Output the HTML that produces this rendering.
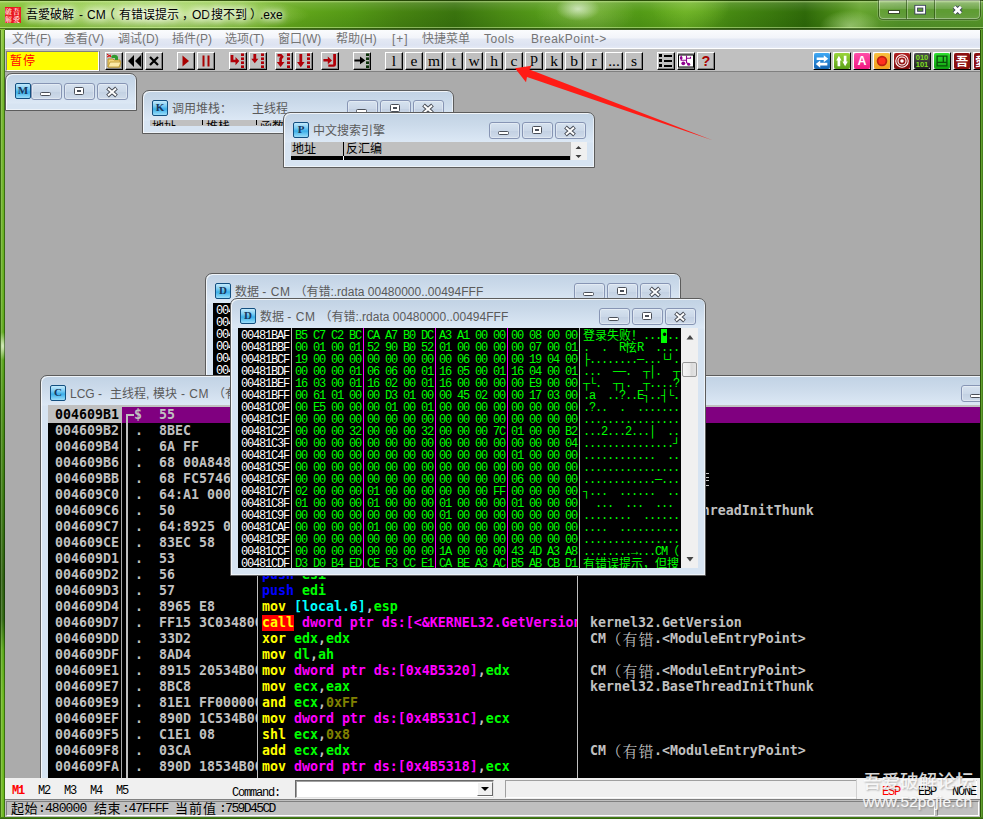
<!DOCTYPE html>
<html><head><meta charset="utf-8"><title>OllyDbg</title><style>
html,body{margin:0;padding:0}
body{width:983px;height:819px;overflow:hidden;position:relative;background:#4f8f16;font-family:"Liberation Sans","Noto Sans CJK SC",sans-serif;font-size:12px;line-height:1}
div,span,i,b{box-sizing:border-box}
.a,.a>span,.a>i,.a>b,.a>svg{position:absolute}
i,b{font-style:normal;font-weight:inherit;display:block}
#glass{left:0;top:0;width:983px;height:819px;background:
 radial-gradient(ellipse 22px 12px at 578px 9px,rgba(215,235,200,.85),rgba(200,230,170,0) 100%),
 radial-gradient(ellipse 50px 26px at 585px 12px,rgba(150,200,90,.6),rgba(150,200,90,0) 100%),
 radial-gradient(ellipse 40px 30px at 690px 4px,rgba(125,190,50,.7),rgba(120,180,60,0) 100%),
 radial-gradient(ellipse 30px 16px at 850px 26px,rgba(190,230,150,.7),rgba(160,210,110,0) 100%),
 radial-gradient(ellipse 150px 20px at 160px 15px,rgba(228,246,190,.85),rgba(215,240,170,.5) 55%,rgba(200,235,150,0) 100%),
 linear-gradient(90deg,#86c433 0px,#82c230 20px,#76b926 250px,#62a61b 300px,#559a16 350px,#478411 400px,#3a740e 455px,#4a8a14 500px,#549a19 540px,#5c9f20 600px,#539b16 640px,#63aa1e 685px,#478a12 730px,#3b7a0e 770px,#2f6a09 805px,#4a8a16 838px,#66a42e 860px,#56962a 900px,#58982a 983px)}
#glasstop{left:0;top:0;width:983px;height:30px;background:linear-gradient(180deg,rgba(25,50,0,.75) 0px,rgba(25,50,0,.75) 1px,rgba(235,250,200,.55) 1px,rgba(235,250,200,.35) 2px,rgba(255,255,255,.12) 3px,rgba(255,255,255,0) 12px,rgba(0,40,0,.10) 26px,rgba(0,40,0,.10) 27px,rgba(220,245,180,.45) 27px,rgba(220,245,180,.45) 28px,rgba(30,60,10,.6) 28px,rgba(30,60,10,.6) 29px,transparent 29px)}
#title{left:0;top:7px;font-size:12px;line-height:16px;color:#000;white-space:nowrap;text-shadow:0 0 6px #fff,0 0 8px #fff,0 0 10px rgba(255,255,255,.8)}
#title span{top:0}
#client{left:5px;top:29px;width:975px;height:788px;background:#ababab;overflow:hidden}
#menubar{left:0;top:0;width:975px;height:19px;border-top:1px solid #44662a;background:linear-gradient(180deg,#fbfcfe 0,#f2f4fa 8px,#e4e9f4 9px,#dde3f1 15px,#e4e9f5 18px)}
#menubar span{top:1px;line-height:16px;font-size:12px;color:#747474;white-space:nowrap}
#toolbar{left:0;top:19px;width:975px;height:24px;background:#c0c0c0;border-top:1px solid #fff;border-bottom:1px solid #808080}
.tb{position:absolute;top:3px;height:18px;width:18px;background:#c0c0c0;border:1px solid;border-color:#fff #000 #000 #fff;box-shadow:inset -1px -1px 0 #808080;overflow:hidden}
.tbl{font-family:"Liberation Serif",serif;font-size:15.5px;line-height:16px;text-align:center;color:#000}
.ti{position:absolute;top:2px;height:18px;width:18px;border-radius:3px;overflow:hidden;box-shadow:1px 1px 0 #000}
#mdi{left:0;top:43px;width:975px;height:706px;overflow:hidden;background:#ababab}
.win{position:absolute;border:1px solid #5c5c5c;border-radius:7px 7px 0 0;background:linear-gradient(180deg,#c1d2e4 0px,#cbdaea 12px,#dce8f5 29px,#d7e4f2 30px,#d7e4f2 100%);box-shadow:inset 1px 1px 0 rgba(255,255,255,.75),inset -1px -1px 0 rgba(255,255,255,.55);overflow:hidden}
.wt{position:absolute;top:9px;line-height:18px;font-size:12px;color:#5a5a5a;white-space:pre}
.wt b{display:inline;letter-spacing:.55px}
.wt b.t2{letter-spacing:0}
.wi{position:absolute;left:9px;top:9px;width:16px;height:16px;border:1px solid #124f80;border-radius:2px;background:linear-gradient(180deg,#c4eafc 0,#7cccf3 35%,#3aaee8 58%,#6cc8f2 80%,#9bdcf8 100%);font-family:"Liberation Serif",serif;font-weight:bold;font-size:11px;line-height:13px;text-align:center;color:#17365d}
.cb{position:absolute;top:9px;width:31px;height:17px;border:1px solid #8795b4;border-radius:3px;background:linear-gradient(180deg,#d6e2ef 0,#cbd8e8 50%,#c2d0e2 51%,#cfdbea 100%);box-shadow:inset 0 0 0 1px rgba(255,255,255,.35)}
.cb svg{position:absolute;left:0;top:1px}
.mono{font-family:"Liberation Mono","Noto Sans CJK SC",monospace;font-size:10px;white-space:pre}
.dump{position:absolute;background:#000;overflow:hidden}
.dump i{position:absolute;height:12px;line-height:12px;font-family:"Liberation Mono","Noto Sans CJK SC",monospace;font-size:12px;white-space:pre;color:#00ff00;letter-spacing:-1.2px}
.dump i.ad{color:#fff}
.dump u{position:relative;top:-1.5px;text-decoration:none;font-size:12px;line-height:12px;font-family:"Noto Sans CJK SC",sans-serif;display:inline-block;width:12px;height:12px;vertical-align:top;letter-spacing:0}
.vl{position:absolute;top:0;width:1px;height:100%}
.sb{position:absolute;background:#f0f0f0}
.cpu{position:absolute;background:#000;overflow:hidden}
.cpu i,.cpu .a>i{position:absolute;height:16px;line-height:16px;font-family:"DejaVu Sans Mono","Liberation Mono","Noto Sans CJK SC",monospace;font-weight:bold;font-size:13.28px;white-space:pre;color:#c0c0c0}
.cpu i b{display:inline}
.cpu u{text-decoration:none;display:inline-block;width:16px;height:16px;font-size:15px;line-height:16px;font-weight:normal;font-family:"Noto Serif CJK SC","Noto Sans CJK SC",serif;vertical-align:top;text-align:center}
.y{color:#ffff00}.g{color:#00ff00}.m{color:#ff00ff}.c{color:#00ffff}.bl{color:#0000ff}.o{color:#808000}.w{color:#c0c0c0}
.cpu i b.call{color:#ffff00;background:#ff0000;display:inline-block;height:16px;vertical-align:top}
#cmdbar{left:0;top:749px;width:975px;height:22px;background:#f0f0f0;border-bottom:1px solid #808080}
#cmdbar span{font-family:"Liberation Mono","Noto Sans CJK SC",monospace;font-size:12px;letter-spacing:-1.2px;line-height:12px;white-space:pre;color:#000}
#status{left:0;top:771px;width:975px;height:17px;background:#c0c0c0}
</style></head><body><div class="a" id="glass"></div><div class="a" id="glasstop"></div>
<div class="a" style="left:0;top:30px;width:5px;height:789px;background:linear-gradient(90deg,rgba(20,50,0,.55) 0,rgba(20,50,0,.55) 1px,rgba(255,255,255,.25) 1px,rgba(255,255,255,0) 3px,rgba(0,30,0,.0) 4px,rgba(0,30,0,.45) 4px),radial-gradient(ellipse 6px 14px at 3px 316px,rgba(230,245,210,.9),rgba(200,230,160,0)),linear-gradient(180deg,#8cc83c 0,#72b52a 70px,#66ae20 270px,#5aa41a 330px,#4c9014 380px,#3a7810 470px,#2f6010 550px,#326812 590px,#5aa818 620px,#6cb81e 670px,#6cb81e 789px)"></div>
<div class="a" style="left:980px;top:30px;width:3px;height:789px;background:linear-gradient(90deg,#2a5208 0,#2a5208 1px,#6aa838 1px,#5a9a2a 2px,#3a6a14 3px)"></div>
<div class="a" style="left:0;top:817px;width:983px;height:2px;background:linear-gradient(180deg,#4a8a1a,#2f5a0c)"></div>
<div class="a" style="left:5px;top:7px;width:16px;height:16px;background:#e81820;overflow:hidden;font-size:7px;line-height:8px;color:#ffd8d0;font-family:'Noto Serif CJK SC',serif;font-weight:bold"><span style="left:0;top:0;width:16px;letter-spacing:1px;white-space:pre">破吾
解愛</span></div>
<div class="a" id="title"><span style="left:26px">吾愛破解</span><span style="left:79px">-</span><span style="left:87px">CM</span><span style="left:103px">（</span><span style="left:119px">有错误提示</span><span style="left:182px">，</span><span style="left:192px">OD</span><span style="left:211px">搜不到</span><span style="left:250px">）</span><span style="left:260px">.exe</span></div>
<div class="a" style="left:878px;top:0;width:103px;height:20px;border:1px solid rgba(20,50,0,.55);border-top:none;border-radius:0 0 5px 5px;box-shadow:inset 0 0 0 1px rgba(255,255,255,.35),0 0 0 1px rgba(255,255,255,.15);background:linear-gradient(180deg,rgba(255,255,255,.30),rgba(255,255,255,.12) 45%,rgba(255,255,255,.02) 50%,rgba(255,255,255,.12))">
<i style="left:27px;top:0;width:1px;height:19px;background:rgba(20,50,0,.5)"></i><i style="left:28px;top:0;width:1px;height:19px;background:rgba(255,255,255,.3)"></i>
<i style="left:55px;top:0;width:1px;height:19px;background:rgba(20,50,0,.5)"></i><i style="left:56px;top:0;width:1px;height:19px;background:rgba(255,255,255,.3)"></i>
<svg width="101" height="20" style="left:0;top:0"><rect x="9.5" y="10.5" width="11" height="3" fill="#fff" stroke="#3a4a2a" stroke-width="1"/><rect x="37.2" y="6.7" width="8" height="6" fill="none" stroke="#3a4058" stroke-width="3.6"/><rect x="37.2" y="6.7" width="8" height="6" fill="none" stroke="#fff" stroke-width="1.8"/><path d="M75.3 6.8 L81.9 13.2 M81.9 6.8 L75.3 13.2" stroke="#3a4058" stroke-width="4.6" fill="none"/><path d="M75.3 6.8 L81.9 13.2 M81.9 6.8 L75.3 13.2" stroke="#fff" stroke-width="2.8" fill="none"/></svg></div>
<div class="a" id="client">
<div class="a" id="menubar"><span style="left:7px">文件(F)</span><span style="left:59px">查看(V)</span><span style="left:113px">调试(D)</span><span style="left:167px">插件(P)</span><span style="left:220px">选项(T)</span><span style="left:273px">窗口(W)</span><span style="left:331px">帮助(H)</span><span style="left:387px;letter-spacing:1px">[+]</span><span style="left:417px">快捷菜单</span><span style="left:479px;letter-spacing:.5px">Tools</span><span style="left:526px;letter-spacing:.5px">BreakPoint-&gt;</span></div>
<div class="a" id="toolbar"><div class="a" style="left:1px;top:2px;width:93px;height:20px;background:#ffff00;border:1px solid;border-color:#808080 #fff #fff #808080;box-shadow:1px 0 0 #808080"><span style="left:3px;top:1px;color:#ff0000;font-size:12px;line-height:14px;letter-spacing:1px;font-family:'Noto Sans CJK SC',sans-serif">暂停</span></div><div class="tb " style="left:100px"><svg width="16" height="16" viewBox="0 0 16 16" style="position:absolute;left:0;top:0"><path d="M2 6h5l1 1h6v7H2z" fill="#f4d77a" stroke="#b8922a" stroke-width="1"/><path d="M2 14l2-5h11l-2 5z" fill="#fbe9a6" stroke="#b8922a" stroke-width=".8"/><path d="M5 4c1-3 6-3 7 0v3h-3V5H6z" fill="#2f9a2f"/><path d="M1 1l4 3M1 4l4-2" stroke="#e00000" stroke-width="1"/></svg></div><div class="tb " style="left:120px"><svg width="16" height="16" viewBox="0 0 16 16" style="position:absolute;left:0;top:0"><path d="M8 2v12L2 8zM15 2v12L9 8z" fill="#000"/></svg></div><div class="tb " style="left:140px"><svg width="16" height="16" viewBox="0 0 16 16" style="position:absolute;left:0;top:0"><path d="M4 4l8 8M12 4l-8 8" stroke="#000" stroke-width="2.2" fill="none"/></svg></div><div class="tb " style="left:172px"><svg width="16" height="16" viewBox="0 0 16 16" style="position:absolute;left:0;top:0"><path d="M4.5 2.5L11 8 4.5 13.5z" fill="#a80000"/></svg></div><div class="tb " style="left:192px"><svg width="16" height="16" viewBox="0 0 16 16" style="position:absolute;left:0;top:0"><path d="M4.5 2.5h2v11h-2zM9.5 2.5h2v11h-2z" fill="#a80000"/></svg></div><div class="tb " style="left:224px"><svg width="16" height="16" viewBox="0 0 16 16" style="position:absolute;left:0;top:0"><path d="M0.6 2H3.4V6.8H5.5V4L9.3 8.1 5.5 12.2V9.3H0.6z" fill="#b00008"/><rect x="11" y="0.4" width="3" height="2.6" fill="#b00008"/><rect x="11" y="4.4" width="3" height="2.6" fill="#b00008"/><rect x="11" y="8.4" width="3" height="2.6" fill="#b00008"/><rect x="11" y="12.4" width="3" height="2.6" fill="#b00008"/></svg></div><div class="tb " style="left:244px"><svg width="16" height="16" viewBox="0 0 16 16" style="position:absolute;left:0;top:0"><path d="M3.4 1H6.2V5.7H8.4L4.8 10.2 1.2 5.7H3.4z" fill="#b00008"/><rect x="11" y="0.4" width="3" height="2.6" fill="#b00008"/><rect x="11" y="4.4" width="3" height="2.6" fill="#b00008"/><rect x="11" y="8.4" width="3" height="2.6" fill="#b00008"/><rect x="11" y="12.4" width="3" height="2.6" fill="#b00008"/></svg></div><div class="tb " style="left:270px"><svg width="16" height="16" viewBox="0 0 16 16" style="position:absolute;left:0;top:0"><path d="M1.5 1H5.5L7.8 3.8 5.9 6.2V9H8.5L4.6 14 0.7 9H3.3V5.3L4.6 3.6H1.5z" fill="#b00008"/><rect x="11" y="0.4" width="3" height="2.6" fill="#b00008"/><rect x="11" y="4.4" width="3" height="2.6" fill="#b00008"/><rect x="11" y="8.4" width="3" height="2.6" fill="#b00008"/><rect x="11" y="12.4" width="3" height="2.6" fill="#b00008"/></svg></div><div class="tb " style="left:290px"><svg width="16" height="16" viewBox="0 0 16 16" style="position:absolute;left:0;top:0"><path d="M3.4 1H6.2V9H8.6L4.8 14.2 1 9H3.4z" fill="#b00008"/><rect x="11" y="0.4" width="3" height="2.6" fill="#b00008"/><rect x="11" y="4.4" width="3" height="2.6" fill="#b00008"/><rect x="11" y="8.4" width="3" height="2.6" fill="#b00008"/><rect x="11" y="12.4" width="3" height="2.6" fill="#b00008"/></svg></div><div class="tb " style="left:316px"><svg width="16" height="16" viewBox="0 0 16 16" style="position:absolute;left:0;top:0"><path d="M1.4 6H5.8V3.6L10 7.4 5.8 11.2V8.5H1.4z" fill="#b00008"/><path d="M11.2 1H14V11.5a2.3 2.3 0 0 1-2.3 2.3H6.3V11.5H11.2z" fill="#b00008"/></svg></div><div class="tb " style="left:348px"><svg width="16" height="16" viewBox="0 0 16 16" style="position:absolute;left:0;top:0"><path d="M0.4 6.4H6V3.6L11.4 7.4 6 11.2V8.5H0.4z" fill="#000"/><rect x="12" y="0.4" width="3" height="2.6" fill="#0a3008"/><rect x="12" y="4.4" width="3" height="2.6" fill="#0a3008"/><rect x="12" y="8.4" width="3" height="2.6" fill="#0a3008"/><rect x="12" y="12.4" width="3" height="2.6" fill="#0a3008"/></svg></div><div class="tb tbl" style="left:380px">l</div><div class="tb tbl" style="left:400px">e</div><div class="tb tbl" style="left:420px">m</div><div class="tb tbl" style="left:440px">t</div><div class="tb tbl" style="left:460px">w</div><div class="tb tbl" style="left:480px">h</div><div class="tb tbl" style="left:500px">c</div><div class="tb tbl" style="left:520px"><span style="position:relative;top:-3px">p</span></div><div class="tb tbl" style="left:540px">k</div><div class="tb tbl" style="left:560px">b</div><div class="tb tbl" style="left:580px">r</div><div class="tb tbl" style="left:600px">...</div><div class="tb tbl" style="left:620px">s</div><div class="tb " style="left:652px"><svg width="16" height="16" viewBox="0 0 16 16" style="position:absolute;left:0;top:0"><path d="M1 1h3v3H1zM1 6h3v3H1zM1 11h3v3H1zM6 2h8v2H6zM6 7h8v2H6zM6 12h8v2H6z" fill="#000"/></svg></div><div class="tb " style="left:672px"><svg width="16" height="16" viewBox="0 0 16 16" style="position:absolute;left:0;top:0"><rect x="0" y="0" width="16" height="2" fill="#a0a0a0"/><rect x="0.5" y="2" width="15" height="12" fill="#fff" stroke="#000"/><path d="M3.2 2.5v4.7h5.5M8.5 2.5v7l2.2 2M8.5 5.3h4v-1.5" stroke="#900090" stroke-width="1.1" fill="none"/><circle cx="3.2" cy="5" r="1.4" fill="#900090"/><circle cx="5.3" cy="10.3" r="1.9" fill="#900090"/><circle cx="10.7" cy="11.2" r="1.5" fill="#900090"/></svg></div><div class="tb " style="left:692px"><span style="position:absolute;left:0;top:-1px;width:16px;text-align:center;font-family:'Liberation Sans',sans-serif;font-weight:bold;font-size:14.5px;line-height:19px;color:#a80000">?</span></div><div class="tb" style="left:808px;border-color:#fff #000 #000 #fff;box-shadow:none;background:#e8e8e8"><div style="position:absolute;left:0;top:0;width:16px;height:16px;border-radius:2px;overflow:hidden;background:linear-gradient(180deg,#3fa9f5,#1464b4)"><div style="position:absolute;left:-1px;top:-1px;width:18px;height:18px;transform:scale(.89);transform-origin:9px 9px"><svg width="18" height="18" viewBox="0 0 18 18" style="position:absolute;left:0;top:0"><path d="M3 5h8V2.5l5 4-5 4V8H3zM15 11H7v-2.5l-5 4 5 4V14h8z" fill="#fff"/></svg></div></div></div><div class="tb" style="left:828px;border-color:#fff #000 #000 #fff;box-shadow:none;background:#e8e8e8"><div style="position:absolute;left:0;top:0;width:16px;height:16px;border-radius:2px;overflow:hidden;background:linear-gradient(180deg,#9ad53a,#5aa018)"><div style="position:absolute;left:-1px;top:-1px;width:18px;height:18px;transform:scale(.89);transform-origin:9px 9px"><svg width="18" height="18" viewBox="0 0 18 18" style="position:absolute;left:0;top:0"><path d="M2.5 8.5L5.5 3l3 5.5H7V15H4V8.5zM15.5 9.5L12.5 15l-3-5.5H11V3h3v6.5z" fill="#fff"/></svg></div></div></div><div class="tb" style="left:848px;border-color:#fff #000 #000 #fff;box-shadow:none;background:#e8e8e8"><div style="position:absolute;left:0;top:0;width:16px;height:16px;border-radius:2px;overflow:hidden;background:linear-gradient(180deg,#ff4fa8,#f01880)"><div style="position:absolute;left:-1px;top:-1px;width:18px;height:18px;transform:scale(.89);transform-origin:9px 9px"><span style="position:absolute;left:0;top:0;width:18px;text-align:center;color:#fff;font-weight:bold;font-size:14px;line-height:18px;font-family:'Liberation Sans',sans-serif">A</span></div></div></div><div class="tb" style="left:868px;border-color:#fff #000 #000 #fff;box-shadow:none;background:#e8e8e8"><div style="position:absolute;left:0;top:0;width:16px;height:16px;border-radius:2px;overflow:hidden;background:linear-gradient(180deg,#f8c040,#f0a020)"><div style="position:absolute;left:-1px;top:-1px;width:18px;height:18px;transform:scale(.89);transform-origin:9px 9px"><svg width="18" height="18" viewBox="0 0 18 18" style="position:absolute;left:0;top:0"><circle cx="9" cy="9" r="6" fill="#c02010"/><circle cx="9" cy="9" r="4" fill="#ff3020"/></svg></div></div></div><div class="tb" style="left:888px;border-color:#fff #000 #000 #fff;box-shadow:none;background:#e8e8e8"><div style="position:absolute;left:0;top:0;width:16px;height:16px;border-radius:2px;overflow:hidden;background:linear-gradient(180deg,#b02020,#801010)"><div style="position:absolute;left:-1px;top:-1px;width:18px;height:18px;transform:scale(.89);transform-origin:9px 9px"><svg width="18" height="18" viewBox="0 0 18 18" style="position:absolute;left:0;top:0"><circle cx="9" cy="9" r="7" fill="none" stroke="#fff" stroke-width="1.2"/><circle cx="9" cy="9" r="4.5" fill="none" stroke="#fff" stroke-width="1.2"/><circle cx="9" cy="9" r="2" fill="#fff"/></svg></div></div></div><div class="tb" style="left:908px;border-color:#fff #000 #000 #fff;box-shadow:none;background:#e8e8e8"><div style="position:absolute;left:0;top:0;width:16px;height:16px;border-radius:2px;overflow:hidden;background:linear-gradient(180deg,#505050,#202020)"><div style="position:absolute;left:-1px;top:-1px;width:18px;height:18px;transform:scale(.89);transform-origin:9px 9px"><span style="position:absolute;left:0;top:1px;width:18px;text-align:center;color:#80e020;font-weight:bold;font-size:8.5px;line-height:8px;font-family:'Liberation Sans',sans-serif;white-space:pre">010
101</span></div></div></div><div class="tb" style="left:928px;border-color:#fff #000 #000 #fff;box-shadow:none;background:#e8e8e8"><div style="position:absolute;left:0;top:0;width:16px;height:16px;border-radius:2px;overflow:hidden;background:linear-gradient(180deg,#30e030,#10a010)"><div style="position:absolute;left:-1px;top:-1px;width:18px;height:18px;transform:scale(.89);transform-origin:9px 9px"><svg width="18" height="18" viewBox="0 0 18 18" style="position:absolute;left:0;top:0"><path d="M3.5 3.5h11v11h-11zM3.5 10.5h11M10.5 3.5v7" fill="none" stroke="#0a500a" stroke-width="1.5"/></svg></div></div></div><div class="tb" style="left:948px;border-color:#fff #000 #000 #fff;box-shadow:none;background:#e8e8e8"><div style="position:absolute;left:0;top:0;width:16px;height:16px;border-radius:2px;overflow:hidden;background:#8b0f0f"><div style="position:absolute;left:-1px;top:-1px;width:18px;height:18px;transform:scale(.89);transform-origin:9px 9px"><span style="position:absolute;left:0;top:0;width:18px;text-align:center;color:#fff;font-weight:bold;font-size:14px;line-height:18px;font-family:'Noto Sans CJK SC',sans-serif">吾</span></div></div></div><div class="tb" style="left:968px;border-color:#fff #000 #000 #fff;box-shadow:none;background:#e8e8e8"><div style="position:absolute;left:0;top:0;width:16px;height:16px;border-radius:2px;overflow:hidden;background:#8b0f0f"><div style="position:absolute;left:-1px;top:-1px;width:18px;height:18px;transform:scale(.89);transform-origin:9px 9px"><span style="position:absolute;left:1px;top:0;width:18px;color:#fff;font-weight:bold;font-size:14px;line-height:18px;font-family:'Noto Sans CJK SC',sans-serif">愛</span></div></div></div></div>
<div class="a" id="mdi"><div class="win" style="left:0px;top:1px;width:132px;height:38px;"><div class="wi">M</div><span class="wt" style="left:29px"></span><div class="cb" style="left:25px;top:9px"><svg width="29" height="14"><rect x="8.5" y="7.5" width="10" height="3" rx="1" fill="#fff" stroke="#4a4f58"/></svg></div><div class="cb" style="left:58px;top:9px"><svg width="29" height="14"><rect x="9.5" y="2.5" width="9" height="7" rx="1" fill="#fff" stroke="#4a4f58"/><rect x="12.5" y="5.5" width="3" height="1" fill="#d0dae8" stroke="#4a4f58"/></svg></div><div class="cb" style="left:91px;top:9px"><svg width="29" height="14"><path d="M9.5 3l9 8M18.5 3l-9 8" stroke="#4a4f58" stroke-width="4" fill="none"/><path d="M10 3.5l8 7M18 3.5l-8 7" stroke="#fff" stroke-width="2" fill="none"/></svg></div></div><div class="win" style="left:137px;top:18px;width:312px;height:44px;"><div class="wi">K</div><span class="wt" style="left:29px">调用堆栈：<b style="display:inline-block;width:20px"></b>主线程</span><div class="cb" style="left:204px;top:9px"><svg width="29" height="14"><rect x="8.5" y="7.5" width="10" height="3" rx="1" fill="#fff" stroke="#4a4f58"/></svg></div><div class="cb" style="left:237px;top:9px"><svg width="29" height="14"><rect x="9.5" y="2.5" width="9" height="7" rx="1" fill="#fff" stroke="#4a4f58"/><rect x="12.5" y="5.5" width="3" height="1" fill="#d0dae8" stroke="#4a4f58"/></svg></div><div class="cb" style="left:270px;top:9px"><svg width="29" height="14"><path d="M9.5 3l9 8M18.5 3l-9 8" stroke="#4a4f58" stroke-width="4" fill="none"/><path d="M10 3.5l8 7M18 3.5l-8 7" stroke="#fff" stroke-width="2" fill="none"/></svg></div><div class="a" style="left:7px;top:29px;width:296px;height:6px;background:#c0c0c0;overflow:hidden;font-size:12px;color:#000"><span style="left:2px;top:1px">地址</span><span style="left:56px;top:1px">堆栈</span><span style="left:110px;top:1px">函数</span><i style="left:52px;top:0;width:1px;height:5px;background:#000"></i><i style="left:106px;top:0;width:1px;height:5px;background:#000"></i></div></div><div class="win" style="left:278px;top:40px;width:312px;height:56px;"><div class="wi">P</div><span class="wt" style="left:29px">中文搜索引擎</span><div class="cb" style="left:205px;top:9px"><svg width="29" height="14"><rect x="8.5" y="7.5" width="10" height="3" rx="1" fill="#fff" stroke="#4a4f58"/></svg></div><div class="cb" style="left:238px;top:9px"><svg width="29" height="14"><rect x="9.5" y="2.5" width="9" height="7" rx="1" fill="#fff" stroke="#4a4f58"/><rect x="12.5" y="5.5" width="3" height="1" fill="#d0dae8" stroke="#4a4f58"/></svg></div><div class="cb" style="left:271px;top:9px"><svg width="29" height="14"><path d="M9.5 3l9 8M18.5 3l-9 8" stroke="#4a4f58" stroke-width="4" fill="none"/><path d="M10 3.5l8 7M18 3.5l-8 7" stroke="#fff" stroke-width="2" fill="none"/></svg></div><div class="a" style="left:7px;top:29px;width:280px;height:18px;background:#c0c0c0;overflow:hidden;font-size:12px;color:#000"><span style="left:1px;top:1px;line-height:13px">地址</span><span style="left:55px;top:1px;line-height:13px">反汇编</span><i style="left:52px;top:0;width:1px;height:14px;background:#000"></i><i style="left:0;top:14px;width:279px;height:4px;background:#000"></i><i style="left:52px;top:14px;width:1px;height:4px;background:#fff"></i></div><div class="a" style="left:287px;top:29px;width:16px;height:18px;background:#f0f0f0"><svg width="16" height="18" style="left:0;top:0"><path d="M4.5 7l3-3 3 3zM4.5 13l3 3 3-3z" fill="#404040"/></svg></div></div><div class="win" style="left:200px;top:201px;width:476px;height:290px;"><div class="wi">D</div><span class="wt" style="left:29px">数据 <b>- CM </b>（有错<b class="t2">:.rdata 00480000..00494FFF</b></span><div class="cb" style="left:368px;top:9px"><svg width="29" height="14"><rect x="8.5" y="7.5" width="10" height="3" rx="1" fill="#fff" stroke="#4a4f58"/></svg></div><div class="cb" style="left:401px;top:9px"><svg width="29" height="14"><rect x="9.5" y="2.5" width="9" height="7" rx="1" fill="#fff" stroke="#4a4f58"/><rect x="12.5" y="5.5" width="3" height="1" fill="#d0dae8" stroke="#4a4f58"/></svg></div><div class="cb" style="left:434px;top:9px"><svg width="29" height="14"><path d="M9.5 3l9 8M18.5 3l-9 8" stroke="#4a4f58" stroke-width="4" fill="none"/><path d="M10 3.5l8 7M18 3.5l-8 7" stroke="#fff" stroke-width="2" fill="none"/></svg></div><div class="dump" style="left:7px;top:29px;width:442px;height:240px"><i class="ad" style="left:3px;top:2px">00481BAF</i><i class="ad" style="left:3px;top:14px">00481BBF</i><i class="ad" style="left:3px;top:26px">00481BCF</i><i class="ad" style="left:3px;top:38px">00481BDF</i><i class="ad" style="left:3px;top:50px">00481BEF</i><i class="ad" style="left:3px;top:62px">00481BFF</i><i class="ad" style="left:3px;top:74px">00481C0F</i><i class="ad" style="left:3px;top:86px">00481C1F</i><i class="ad" style="left:3px;top:98px">00481C2F</i><i class="ad" style="left:3px;top:110px">00481C3F</i><i class="ad" style="left:3px;top:122px">00481C4F</i><i class="ad" style="left:3px;top:134px">00481C5F</i><i class="ad" style="left:3px;top:146px">00481C6F</i><i class="ad" style="left:3px;top:158px">00481C7F</i><i class="ad" style="left:3px;top:170px">00481C8F</i><i class="ad" style="left:3px;top:182px">00481C9F</i><i class="ad" style="left:3px;top:194px">00481CAF</i><i class="ad" style="left:3px;top:206px">00481CBF</i><i class="ad" style="left:3px;top:218px">00481CCF</i><i class="ad" style="left:3px;top:230px">00481CDF</i></div></div><div class="win" style="left:35px;top:303px;width:1000px;height:450px;"><div class="wi">C</div><span class="wt" style="left:29px"><b style="display:inline-block;width:40px;letter-spacing:0">LCG - </b>主线程<b style="display:inline-block;width:7px;letter-spacing:0">,</b>模块<b> - CM </b>（有错<b>:&lt;ModuleEntryPoint&gt;</b></span><div class="cb" style="left:920px;top:9px"><svg width="29" height="14"><rect x="8.5" y="7.5" width="10" height="3" rx="1" fill="#fff" stroke="#4a4f58"/></svg></div><div class="cb" style="left:953px;top:9px"><svg width="29" height="14"><rect x="9.5" y="2.5" width="9" height="7" rx="1" fill="#fff" stroke="#4a4f58"/><rect x="12.5" y="5.5" width="3" height="1" fill="#d0dae8" stroke="#4a4f58"/></svg></div><div class="cb" style="left:986px;top:9px"><svg width="29" height="14"><path d="M9.5 3l9 8M18.5 3l-9 8" stroke="#4a4f58" stroke-width="4" fill="none"/><path d="M10 3.5l8 7M18 3.5l-8 7" stroke="#fff" stroke-width="2" fill="none"/></svg></div><div class="cpu" style="left:7px;top:29px;width:961px;height:400px"><i style="left:0;top:0;width:1px;height:18px;background:#c0c0c0"></i><div class="a" style="left:1px;top:0;width:960px;height:400px"><i style="left:0;top:0;width:940px;height:2px;background:#c0c0c0"></i><i style="left:73px;top:2px;width:870px;height:16px;background:#800080"></i><i style="left:0;top:2px;width:73px;height:16px;background:#c0c0c0"></i><i style="left:6px;top:2px;color:#000;">004609B1</i><i style="left:85px;top:2px">$</i><i style="left:110px;top:2px;width:98px;overflow:hidden">55</i><i style="left:213px;top:2px;width:315px;overflow:hidden;color:#c0c0c0"><b class="bl">push</b> <b class="g">ebp</b></i><i style="left:6px;top:18px;">004609B2</i><i style="left:86px;top:18px">.</i><i style="left:110px;top:18px;width:98px;overflow:hidden">8BEC</i><i style="left:213px;top:18px;width:315px;overflow:hidden;color:#c0c0c0"><b class="y">mov</b> <b class="g">ebp</b>,<b class="g">esp</b></i><i style="left:6px;top:34px;">004609B4</i><i style="left:86px;top:34px">.</i><i style="left:110px;top:34px;width:98px;overflow:hidden">6A FF</i><i style="left:213px;top:34px;width:315px;overflow:hidden;color:#c0c0c0"><b class="bl">push</b> <b class="o">-0x1</b></i><i style="left:6px;top:50px;">004609B6</i><i style="left:86px;top:50px">.</i><i style="left:110px;top:50px;width:98px;overflow:hidden">68 00A84800</i><i style="left:213px;top:50px;width:315px;overflow:hidden;color:#c0c0c0"><b class="bl">push</b> <b class="o">0x48A800</b></i><i style="left:6px;top:66px;">004609BB</i><i style="left:86px;top:66px">.</i><i style="left:110px;top:66px;width:98px;overflow:hidden">68 FC574600</i><i style="left:213px;top:66px;width:315px;overflow:hidden;color:#c0c0c0"><b class="bl">push</b> <b class="o">0x4657FC</b></i><i style="left:6px;top:82px;">004609C0</i><i style="left:86px;top:82px">.</i><i style="left:110px;top:82px;width:98px;overflow:hidden">64:A1 00000000</i><i style="left:213px;top:82px;width:315px;overflow:hidden;color:#c0c0c0"><b class="y">mov</b> <b class="g">eax</b>,<b class="m">dword ptr fs:[0]</b></i><i style="left:6px;top:98px;">004609C6</i><i style="left:86px;top:98px">.</i><i style="left:110px;top:98px;width:98px;overflow:hidden">50</i><i style="left:213px;top:98px;width:315px;overflow:hidden;color:#c0c0c0"><b class="bl">push</b> <b class="g">eax</b></i><i style="left:541px;top:98px">kernel32.BaseThreadInitThunk</i><i style="left:6px;top:114px;">004609C7</i><i style="left:86px;top:114px">.</i><i style="left:110px;top:114px;width:98px;overflow:hidden">64:8925 00000000</i><i style="left:213px;top:114px;width:315px;overflow:hidden;color:#c0c0c0"><b class="y">mov</b> <b class="m">dword ptr fs:[0]</b>,<b class="g">esp</b></i><i style="left:6px;top:130px;">004609CE</i><i style="left:86px;top:130px">.</i><i style="left:110px;top:130px;width:98px;overflow:hidden">83EC 58</i><i style="left:213px;top:130px;width:315px;overflow:hidden;color:#c0c0c0"><b class="y">sub</b> <b class="g">esp</b>,<b class="o">0x58</b></i><i style="left:6px;top:146px;">004609D1</i><i style="left:86px;top:146px">.</i><i style="left:110px;top:146px;width:98px;overflow:hidden">53</i><i style="left:213px;top:146px;width:315px;overflow:hidden;color:#c0c0c0"><b class="bl">push</b> <b class="g">ebx</b></i><i style="left:6px;top:162px;">004609D2</i><i style="left:86px;top:162px">.</i><i style="left:110px;top:162px;width:98px;overflow:hidden">56</i><i style="left:213px;top:162px;width:315px;overflow:hidden;color:#c0c0c0"><b class="bl">push</b> <b class="g">esi</b></i><i style="left:6px;top:178px;">004609D3</i><i style="left:86px;top:178px">.</i><i style="left:110px;top:178px;width:98px;overflow:hidden">57</i><i style="left:213px;top:178px;width:315px;overflow:hidden;color:#c0c0c0"><b class="bl">push</b> <b class="g">edi</b></i><i style="left:6px;top:194px;">004609D4</i><i style="left:86px;top:194px">.</i><i style="left:110px;top:194px;width:98px;overflow:hidden">8965 E8</i><i style="left:213px;top:194px;width:315px;overflow:hidden;color:#c0c0c0"><b class="y">mov</b> <b class="c">[local.6]</b>,<b class="g">esp</b></i><i style="left:6px;top:210px;">004609D7</i><i style="left:86px;top:210px">.</i><i style="left:110px;top:210px;width:98px;overflow:hidden">FF15 3C034800</i><i style="left:213px;top:210px;width:315px;overflow:hidden;color:#c0c0c0"><b class="call">call</b> <b class="m">dword ptr ds:[&lt;&amp;KERNEL32.GetVersion&gt;]</b></i><i style="left:541px;top:210px">kernel32.GetVersion</i><i style="left:6px;top:226px;">004609DD</i><i style="left:86px;top:226px">.</i><i style="left:110px;top:226px;width:98px;overflow:hidden">33D2</i><i style="left:213px;top:226px;width:315px;overflow:hidden;color:#c0c0c0"><b class="y">xor</b> <b class="g">edx</b>,<b class="g">edx</b></i><i style="left:541px;top:226px">CM<u>（</u><u>有</u><u>错</u>.&lt;ModuleEntryPoint&gt;</i><i style="left:6px;top:242px;">004609DF</i><i style="left:86px;top:242px">.</i><i style="left:110px;top:242px;width:98px;overflow:hidden">8AD4</i><i style="left:213px;top:242px;width:315px;overflow:hidden;color:#c0c0c0"><b class="y">mov</b> <b class="g">dl</b>,<b class="g">ah</b></i><i style="left:6px;top:258px;">004609E1</i><i style="left:86px;top:258px">.</i><i style="left:110px;top:258px;width:98px;overflow:hidden">8915 20534B00</i><i style="left:213px;top:258px;width:315px;overflow:hidden;color:#c0c0c0"><b class="y">mov</b> <b class="m">dword ptr ds:[0x4B5320]</b>,<b class="g">edx</b></i><i style="left:541px;top:258px">CM<u>（</u><u>有</u><u>错</u>.&lt;ModuleEntryPoint&gt;</i><i style="left:6px;top:274px;">004609E7</i><i style="left:86px;top:274px">.</i><i style="left:110px;top:274px;width:98px;overflow:hidden">8BC8</i><i style="left:213px;top:274px;width:315px;overflow:hidden;color:#c0c0c0"><b class="y">mov</b> <b class="g">ecx</b>,<b class="g">eax</b></i><i style="left:541px;top:274px">kernel32.BaseThreadInitThunk</i><i style="left:6px;top:290px;">004609E9</i><i style="left:86px;top:290px">.</i><i style="left:110px;top:290px;width:98px;overflow:hidden">81E1 FF000000</i><i style="left:213px;top:290px;width:315px;overflow:hidden;color:#c0c0c0"><b class="y">and</b> <b class="g">ecx</b>,<b class="o">0xFF</b></i><i style="left:6px;top:306px;">004609EF</i><i style="left:86px;top:306px">.</i><i style="left:110px;top:306px;width:98px;overflow:hidden">890D 1C534B00</i><i style="left:213px;top:306px;width:315px;overflow:hidden;color:#c0c0c0"><b class="y">mov</b> <b class="m">dword ptr ds:[0x4B531C]</b>,<b class="g">ecx</b></i><i style="left:6px;top:322px;">004609F5</i><i style="left:86px;top:322px">.</i><i style="left:110px;top:322px;width:98px;overflow:hidden">C1E1 08</i><i style="left:213px;top:322px;width:315px;overflow:hidden;color:#c0c0c0"><b class="y">shl</b> <b class="g">ecx</b>,<b class="o">0x8</b></i><i style="left:6px;top:338px;">004609F8</i><i style="left:86px;top:338px">.</i><i style="left:110px;top:338px;width:98px;overflow:hidden">03CA</i><i style="left:213px;top:338px;width:315px;overflow:hidden;color:#c0c0c0"><b class="y">add</b> <b class="g">ecx</b>,<b class="g">edx</b></i><i style="left:541px;top:338px">CM<u>（</u><u>有</u><u>错</u>.&lt;ModuleEntryPoint&gt;</i><i style="left:6px;top:354px;">004609FA</i><i style="left:86px;top:354px">.</i><i style="left:110px;top:354px;width:98px;overflow:hidden">890D 18534B00</i><i style="left:213px;top:354px;width:315px;overflow:hidden;color:#c0c0c0"><b class="y">mov</b> <b class="m">dword ptr ds:[0x4B5318]</b>,<b class="g">ecx</b></i><b class="vl" style="left:72px;top:18px;background:#a8a8a8"></b><i style="left:657px;top:68px;width:3px;height:1px;background:#c0c0c0"></i><i style="left:657px;top:72px;width:3px;height:1px;background:#c0c0c0"></i><i style="left:657px;top:75px;width:3px;height:1px;background:#c0c0c0"></i><i style="left:657px;top:80px;width:3px;height:1px;background:#c0c0c0"></i><b class="vl" style="left:77px;top:9px;background:#c0c0c0;width:2px"></b><i style="left:77px;top:9px;width:8px;height:2px;background:#c0c0c0"></i><b class="vl" style="left:208px;top:18px;background:#c0c0c0"></b><b class="vl" style="left:528px;top:18px;background:#c0c0c0"></b></div></div></div><div class="win" style="left:225px;top:226px;width:476px;height:278px;"><div class="wi">D</div><span class="wt" style="left:29px">数据 <b>- CM </b>（有错<b class="t2">:.rdata 00480000..00494FFF</b></span><div class="cb" style="left:368px;top:9px"><svg width="29" height="14"><rect x="8.5" y="7.5" width="10" height="3" rx="1" fill="#fff" stroke="#4a4f58"/></svg></div><div class="cb" style="left:401px;top:9px"><svg width="29" height="14"><rect x="9.5" y="2.5" width="9" height="7" rx="1" fill="#fff" stroke="#4a4f58"/><rect x="12.5" y="5.5" width="3" height="1" fill="#d0dae8" stroke="#4a4f58"/></svg></div><div class="cb" style="left:434px;top:9px"><svg width="29" height="14"><path d="M9.5 3l9 8M18.5 3l-9 8" stroke="#4a4f58" stroke-width="4" fill="none"/><path d="M10 3.5l8 7M18 3.5l-8 7" stroke="#fff" stroke-width="2" fill="none"/></svg></div><div class="dump" style="left:7px;top:29px;width:443px;height:240px"><i class="ad" style="left:3px;top:2px">00481BAF</i><i style="left:57px;top:2px">B5 C7 C2 BC CA A7 B0 DC A3 A1 00 00 00 08 00 00</i><i style="left:345px;top:2px"><u>登</u><u>录</u><u>失</u><u>败</u><u>！</u>...<b style='display:inline;background:#00ff00;color:#000'>•</b>..</i><i class="ad" style="left:3px;top:14px">00481BBF</i><i style="left:57px;top:14px">00 01 00 01 52 90 B0 52 01 00 00 00 00 07 00 01</i><i style="left:345px;top:14px">.  .  R<u>怰</u>R  ....</i><i class="ad" style="left:3px;top:26px">00481BCF</i><i style="left:57px;top:26px">19 00 00 00 00 00 00 00 00 06 00 00 00 19 04 00</i><i style="left:345px;top:26px">├........─...└┘.</i><i class="ad" style="left:3px;top:38px">00481BDF</i><i style="left:57px;top:38px">00 00 00 01 06 06 00 01 16 05 00 01 16 04 00 01</i><i style="left:345px;top:38px">...  ──.  ┬│.  ┬</i><i class="ad" style="left:3px;top:50px">00481BEF</i><i style="left:57px;top:50px">16 03 00 01 16 02 00 01 16 00 00 00 00 E9 00 00</i><i style="left:345px;top:50px">┬└.  ┬┐.  ┬....?</i><i class="ad" style="left:3px;top:62px">00481BFF</i><i style="left:57px;top:62px">00 61 01 00 00 D3 01 00 00 45 02 00 00 17 03 00</i><i style="left:345px;top:62px">.a  ..?..E┐..┤└.</i><i class="ad" style="left:3px;top:74px">00481C0F</i><i style="left:57px;top:74px">00 E5 00 00 00 01 00 01 00 00 00 00 00 00 00 00</i><i style="left:345px;top:74px">.?..  .  .......</i><i class="ad" style="left:3px;top:86px">00481C1F</i><i style="left:57px;top:86px">00 00 00 00 00 00 00 00 00 00 00 00 00 00 00 00</i><i style="left:345px;top:86px">................</i><i class="ad" style="left:3px;top:98px">00481C2F</i><i style="left:57px;top:98px">00 00 00 32 00 00 00 32 00 00 00 7C 01 00 00 B2</i><i style="left:345px;top:98px">...2...2...│  ..</i><i class="ad" style="left:3px;top:110px">00481C3F</i><i style="left:57px;top:110px">00 00 00 00 00 00 00 00 00 00 00 00 00 00 00 04</i><i style="left:345px;top:110px">...............┘</i><i class="ad" style="left:3px;top:122px">00481C4F</i><i style="left:57px;top:122px">00 00 00 00 00 00 00 00 00 00 00 00 01 00 00 00</i><i style="left:345px;top:122px">............  ..</i><i class="ad" style="left:3px;top:134px">00481C5F</i><i style="left:57px;top:134px">00 00 00 00 00 00 00 00 00 00 00 00 00 00 00 00</i><i style="left:345px;top:134px">................</i><i class="ad" style="left:3px;top:146px">00481C6F</i><i style="left:57px;top:146px">00 00 00 00 00 00 00 00 00 00 00 00 06 00 00 00</i><i style="left:345px;top:146px">............─...</i><i class="ad" style="left:3px;top:158px">00481C7F</i><i style="left:57px;top:158px">02 00 00 00 01 00 00 00 00 00 00 FF 00 00 00 00</i><i style="left:345px;top:158px">┐...  ......  ..</i><i class="ad" style="left:3px;top:170px">00481C8F</i><i style="left:57px;top:170px">01 00 00 00 01 00 00 00 01 00 00 00 01 00 00 00</i><i style="left:345px;top:170px">  ...  ...  ... </i><i class="ad" style="left:3px;top:182px">00481C9F</i><i style="left:57px;top:182px">00 00 00 00 00 00 00 00 01 00 00 00 00 00 00 00</i><i style="left:345px;top:182px">........  ......</i><i class="ad" style="left:3px;top:194px">00481CAF</i><i style="left:57px;top:194px">00 00 00 00 01 00 00 00 00 00 00 00 00 00 00 00</i><i style="left:345px;top:194px">....  ..........</i><i class="ad" style="left:3px;top:206px">00481CBF</i><i style="left:57px;top:206px">00 00 00 00 00 00 00 00 00 00 00 00 00 00 00 00</i><i style="left:345px;top:206px">................</i><i class="ad" style="left:3px;top:218px">00481CCF</i><i style="left:57px;top:218px">00 00 00 00 00 00 00 00 1A 00 00 00 43 4D A3 A8</i><i style="left:345px;top:218px">........→...CM<u>（</u></i><i class="ad" style="left:3px;top:230px">00481CDF</i><i style="left:57px;top:230px">D3 D0 B4 ED CE F3 CC E1 CA BE A3 AC B5 AB CB D1</i><i style="left:345px;top:230px"><u>有</u><u>错</u><u>误</u><u>提</u><u>示</u><u>，</u><u>但</u><u>搜</u></i><b class="vl" style="left:53px;background:#c0c0c0"></b><b class="vl" style="left:125px;background:#ff00ff"></b><b class="vl" style="left:197px;background:#ff00ff"></b><b class="vl" style="left:269px;background:#ff00ff"></b><b class="vl" style="left:341px;background:#c0c0c0"></b></div><div class="sb" style="left:450px;top:29px;width:17px;height:240px"><svg width="17" height="240" style="position:absolute;left:0;top:0"><defs><linearGradient id="thg" x1="0" x2="1" y1="0" y2="0"><stop offset="0" stop-color="#f6f6f6"/><stop offset=".55" stop-color="#e9e9e9"/><stop offset=".6" stop-color="#d9d9d9"/><stop offset="1" stop-color="#e6e6e6"/></linearGradient></defs><path d="M5.5 11.5l3.5-4.5 3.5 4.5z" fill="#454545"/><path d="M5.5 229l3.5 4.5 3.5-4.5z" fill="#454545"/><rect x="1.5" y="34.5" width="14" height="14" rx="1.5" fill="url(#thg)" stroke="#979797"/></svg></div></div></div>
<div class="a" id="cmdbar"><span style="left:7px;top:7px;color:#ff0000;font-weight:bold">M1</span><span style="left:33px;top:7px;">M2</span><span style="left:59px;top:7px;">M3</span><span style="left:85px;top:7px;">M4</span><span style="left:111px;top:7px;">M5</span><span style="left:227px;top:9px">Command:</span><i style="left:290px;top:2px;width:199px;height:18px;background:#fff;border:1px solid;border-color:#696969 #e3e3e3 #e3e3e3 #696969;box-shadow:inset 1px 1px 0 #a0a0a0"></i><i style="left:472px;top:4px;width:16px;height:14px;background:#f0f0f0;border:1px solid;border-color:#fff #696969 #696969 #fff"></i><svg width="16" height="14" style="left:472px;top:4px"><path d="M4 5h8l-4 4z" fill="#000"/></svg><i style="left:500px;top:2px;width:472px;height:18px;background:#f0f0f0;border:1px solid;border-color:#a0a0a0 #fff #fff #a0a0a0"></i><i style="left:851px;top:1px;width:120px;height:20px;background:#f4f4f4;border-left:1px solid #d0d0d0"></i><span style="left:877px;top:8px;color:#ff0000">ESP</span><span style="left:913px;top:8px">EBP</span><span style="left:947px;top:8px">NONE</span></div>
<div class="a" id="status"><i style="left:1px;top:1px;width:929px;height:15px;border:1px solid;border-color:#808080 #fff #fff #808080"></i><i style="left:932px;top:1px;width:42px;height:15px;border:1px solid;border-color:#808080 #fff #fff #808080"></i><span style="left:6px;top:0px;font-family:'Noto Sans CJK SC',sans-serif;font-size:13px;line-height:15px;letter-spacing:0.5px;color:#000;white-space:pre">起始</span><span style="left:33px;top:1px;font-family:'Liberation Mono',monospace;font-size:13px;line-height:16px;letter-spacing:-0.9px;color:#000;white-space:pre">:480000</span><span style="left:89px;top:0px;font-family:'Noto Sans CJK SC',sans-serif;font-size:13px;line-height:15px;letter-spacing:0.5px;color:#000;white-space:pre">结束</span><span style="left:117px;top:1px;font-family:'Liberation Mono',monospace;font-size:13px;line-height:16px;letter-spacing:-1.2px;color:#000;white-space:pre">:47FFFF</span><span style="left:170px;top:0px;font-family:'Noto Sans CJK SC',sans-serif;font-size:13px;line-height:15px;letter-spacing:1px;color:#000;white-space:pre">当前值</span><span style="left:214px;top:1px;font-family:'Liberation Mono',monospace;font-size:13px;line-height:16px;letter-spacing:-1.6px;color:#000;white-space:pre">:759D45CD</span></div>
</div>
<svg class="a" width="983" height="200" style="left:0;top:0;position:absolute"><path d="M515 68.2 L531.5 65.7 L529.5 69.4 L712.5 140.3 L527 77 L526 82.2 Z" fill="#ff1c16"/></svg>
<div class="a" style="left:863px;top:769px;width:120px;font-size:18.5px;line-height:22px;font-weight:500;color:rgba(255,255,255,.86);text-shadow:1px 1px 2px rgba(0,0,0,.3);font-family:'Noto Sans CJK SC',sans-serif;white-space:nowrap;letter-spacing:0">吾爱破解论坛</div>
<div class="a" style="left:863px;top:793px;width:120px;font-size:15.5px;line-height:18px;color:rgba(255,255,255,.88);text-shadow:1px 1px 2px rgba(0,0,0,.3),0 0 1px rgba(255,255,255,.6);font-family:'Liberation Sans',sans-serif;white-space:nowrap;letter-spacing:.1px">www.52pojie.cn</div></body></html>
